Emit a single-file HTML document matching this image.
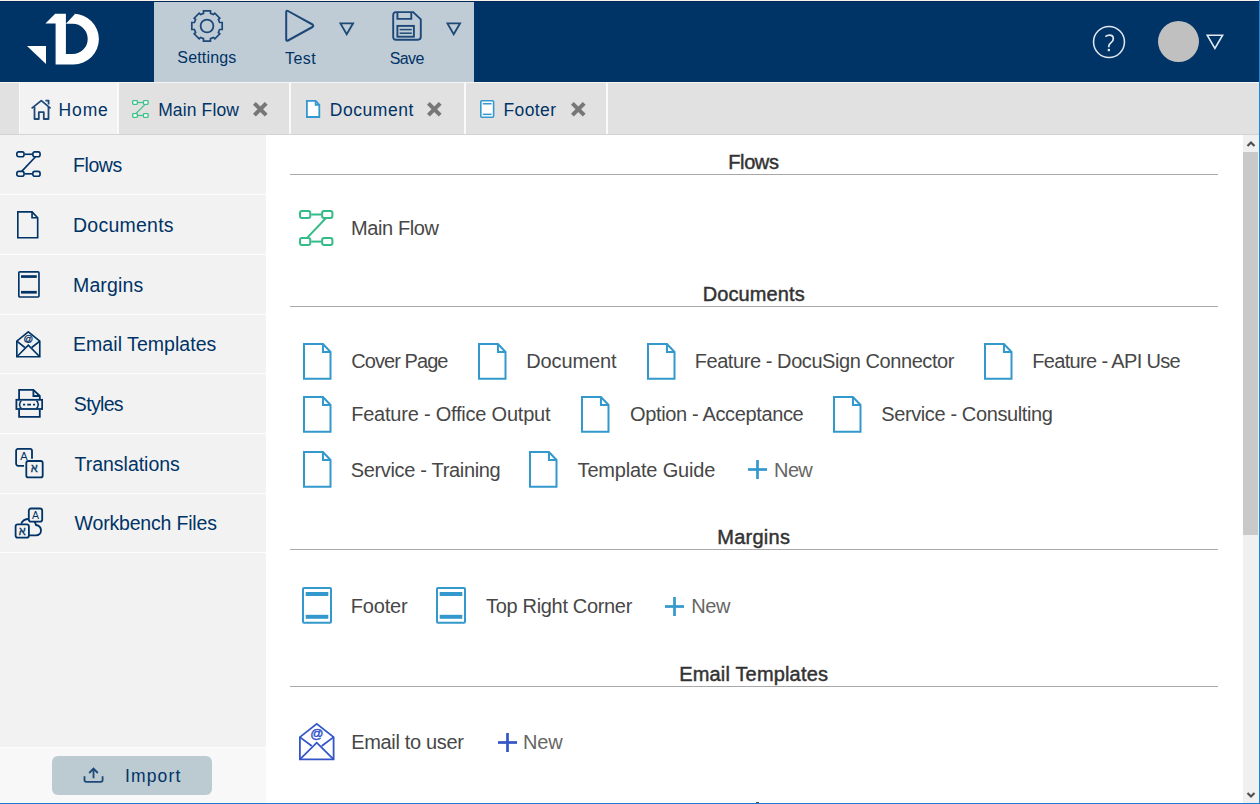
<!DOCTYPE html>
<html><head><meta charset="utf-8">
<style>
*{box-sizing:border-box;margin:0;padding:0}
html,body{width:1260px;height:804px;overflow:hidden;background:#fff;font-family:"Liberation Sans",sans-serif}
.a{position:absolute;display:block}
.t{position:absolute;white-space:nowrap;line-height:1}
</style></head><body>

<div class="a" style="left:0;top:0;width:1260px;height:1px;background:#f7f4ee"></div>
<div class="a" style="left:0;top:1px;width:1260px;height:1px;background:#00265c"></div>
<div class="a" style="left:0;top:2px;width:1260px;height:80px;background:#003366"></div>
<div class="a" style="left:154px;top:2px;width:320px;height:80px;background:#bfccd5"></div>
<div class="a" style="left:0;top:82px;width:1259px;height:53px;background:#e1e1e1"></div>
<div class="a" style="left:0;top:82px;width:1259px;height:1px;background:#f6f6f6"></div>
<div class="a" style="left:0;top:134px;width:1259px;height:1px;background:#d3d3d3"></div>
<div class="a" style="left:20px;top:83px;width:97px;height:51px;background:#f2f2f2"></div>
<div class="a" style="left:19px;top:83px;width:1px;height:51px;background:#fafafa"></div>
<div class="a" style="left:117px;top:83px;width:2px;height:51px;background:#fafafa"></div>
<div class="a" style="left:289px;top:83px;width:2px;height:51px;background:#fafafa"></div>
<div class="a" style="left:464px;top:83px;width:2px;height:51px;background:#fafafa"></div>
<div class="a" style="left:606px;top:83px;width:2px;height:51px;background:#fafafa"></div>
<div class="a" style="left:0;top:135px;width:266px;height:612px;background:#f2f2f2"></div>
<div class="a" style="left:0;top:747px;width:266px;height:1px;background:#fefefe"></div>
<div class="a" style="left:0;top:748px;width:266px;height:55px;background:#f8f8f8"></div>
<div class="a" style="left:0;top:194px;width:266px;height:1px;background:#fdfdfd"></div>
<div class="a" style="left:0;top:254px;width:266px;height:1px;background:#fdfdfd"></div>
<div class="a" style="left:0;top:314px;width:266px;height:1px;background:#fdfdfd"></div>
<div class="a" style="left:0;top:373px;width:266px;height:1px;background:#fdfdfd"></div>
<div class="a" style="left:0;top:433px;width:266px;height:1px;background:#fdfdfd"></div>
<div class="a" style="left:0;top:493px;width:266px;height:1px;background:#fdfdfd"></div>
<div class="a" style="left:0;top:552px;width:266px;height:1px;background:#fdfdfd"></div>
<div class="a" style="left:1243px;top:135px;width:16px;height:668px;background:#f0f0f0"></div>
<div class="a" style="left:1243px;top:152px;width:15px;height:383px;background:#c9c9c9"></div>
<svg class="a" style="left:1243px;top:135px;" width="16" height="17" viewBox="0 0 16 17"><path d="M4.5,11 L8,7.5 L11.5,11" fill="none" stroke="#505050" stroke-width="2.2"/></svg>
<svg class="a" style="left:1243px;top:787px;" width="16" height="17" viewBox="0 0 16 17"><path d="M4.5,6 L8,9.5 L11.5,6" fill="none" stroke="#505050" stroke-width="2.2"/></svg>
<div class="a" style="left:1259px;top:0;width:1px;height:804px;background:#1f86d6"></div>
<div class="a" style="left:0;top:803px;width:1260px;height:1px;background:#1a7bd2"></div>
<svg class="a" style="left:20px;top:8px;" width="90" height="62" viewBox="0 0 90 62"><g transform="translate(-20,-8)" fill="#fff"><path d="M27,46 L46,46 L46,64 Z"/><path d="M45.4,23.6 L55.2,13.7 L65.9,13.7 L65.9,23.8 L75.2,13.7 L73.5,13.7 A25.4,25.4 0 0 1 73.5,64.5 L55.6,64.5 L55.6,23.6 Z M65.9,23.8 L72.6,23.8 A15.1,15.1 0 0 1 72.6,54 L65.9,54 Z" fill-rule="evenodd"/></g></svg>
<svg class="a" style="left:190px;top:9px;" width="34" height="34" viewBox="0 0 34 34"><path d="M13.50,4.40 L13.50,1.80 L20.50,1.80 L20.50,4.40 L23.43,5.62 L24.85,4.20 L29.80,9.15 L28.38,10.57 L29.60,13.50 L32.20,13.50 L32.20,20.50 L29.60,20.50 L28.38,23.43 L29.80,24.85 L24.85,29.80 L23.43,28.38 L20.50,29.60 L20.50,32.20 L13.50,32.20 L13.50,29.60 L10.57,28.38 L9.15,29.80 L4.20,24.85 L5.62,23.43 L4.40,20.50 L1.80,20.50 L1.80,13.50 L4.40,13.50 L5.62,10.57 L4.20,9.15 L9.15,4.20 L10.57,5.62 Z" fill="none" stroke="#1d4878" stroke-width="1.7" stroke-linejoin="miter"/><circle cx="17" cy="17" r="6.4" fill="none" stroke="#1d4878" stroke-width="1.8"/></svg>
<div class="t" style="left:177.32px;top:50.2px;font-size:16px;color:#003366;font-weight:normal;letter-spacing:0.160px;">Settings</div>
<svg class="a" style="left:284px;top:9px;" width="32" height="35" viewBox="0 0 32 35"><path d="M2.2,3 Q2.2,1 4,2 L28.5,15.5 Q30,17 28.5,18 L4,31.5 Q2.2,32.5 2.2,30.5 Z" fill="none" stroke="#1d4878" stroke-width="2" stroke-linejoin="round"/></svg>
<div class="t" style="left:285.00px;top:50.7px;font-size:16px;color:#003366;font-weight:normal;letter-spacing:0.427px;">Test</div>
<svg class="a" style="left:338.5px;top:21.5px;" width="16" height="14" viewBox="0 0 16 14"><path d="M1.3,1.3 L14.1,1.3 L7.7,12.3 Z" fill="none" stroke="#1d4878" stroke-width="1.8" stroke-linejoin="miter"/></svg>
<svg class="a" style="left:445.5px;top:21.5px;" width="16" height="14" viewBox="0 0 16 14"><path d="M1.3,1.3 L14.1,1.3 L7.7,12.3 Z" fill="none" stroke="#1d4878" stroke-width="1.8" stroke-linejoin="miter"/></svg>
<svg class="a" style="left:391px;top:10px;" width="32" height="32" viewBox="0 0 32 32"><path d="M5,2.1 L22.2,2.1 L29.8,9.4 L29.8,26.8 Q29.8,29.7 26.9,29.7 L5,29.7 Q2.2,29.7 2.2,26.9 L2.2,4.9 Q2.2,2.1 5,2.1 Z" fill="none" stroke="#1d4878" stroke-width="1.9"/><path d="M6.4,2.4 L6.4,8.9 L20.3,8.9 L20.3,2.4" fill="none" stroke="#1d4878" stroke-width="1.9"/><rect x="6.4" y="15.9" width="16.5" height="10.8" fill="none" stroke="#1d4878" stroke-width="1.9"/><line x1="8.6" y1="19.6" x2="20.8" y2="19.6" stroke="#1d4878" stroke-width="1.5"/><line x1="8.6" y1="23.2" x2="20.8" y2="23.2" stroke="#1d4878" stroke-width="1.5"/></svg>
<div class="t" style="left:389.82px;top:50.7px;font-size:16px;color:#003366;font-weight:normal;letter-spacing:-0.640px;">Save</div>
<svg class="a" style="left:1092px;top:25px;" width="34" height="34" viewBox="0 0 34 34"><circle cx="17" cy="17" r="15.45" fill="none" stroke="#dfe6ee" stroke-width="1.55"/><path d="M13.4,11.6 Q15.3,10.1 17.5,10.1 Q21.3,10.1 21.3,13.7 Q21.3,16 19.1,17.6 Q16.8,19.2 16.8,21.2 L16.8,22.2" fill="none" stroke="#dfe6ee" stroke-width="1.75"/><rect x="15.7" y="23.9" width="2.3" height="2.3" fill="#dfe6ee"/></svg>
<div class="a" style="left:1158px;top:20.5px;width:41px;height:41px;border-radius:50%;background:#c0c0c0"></div>
<svg class="a" style="left:1206px;top:34px;" width="18" height="17" viewBox="0 0 18 17"><path d="M1.2,1.2 L16.6,1.2 L8.9,14.5 Z" fill="none" stroke="#e3e9ef" stroke-width="1.6"/></svg>
<svg class="a" style="left:30px;top:99px;" width="23" height="22" viewBox="0 0 23 22"><g transform="translate(-30,-99)" fill="none" stroke="#1d4878" stroke-width="1.8" stroke-linejoin="round"><path d="M31.6,108.4 L41.3,100.6 L50.6,108.4"/><path d="M45.4,100.6 L48.6,100.6 L48.6,104.5"/><path d="M34.5,107 L34.5,119 L38.8,119 L38.8,112.2 L43.8,112.2 L43.8,119 L48.5,119 L48.5,107"/></g></svg>
<div class="t" style="left:58.58px;top:101.7px;font-size:17.5px;color:#003366;font-weight:normal;letter-spacing:0.853px;">Home</div>
<svg class="a" style="left:132px;top:99.7px;" width="18" height="19" viewBox="0 0 18 19"><line x1="6.05" y1="2.52" x2="10.75" y2="2.52" stroke="#3cc08a" stroke-width="1.2"/><line x1="6.05" y1="15.48" x2="10.75" y2="15.48" stroke="#3cc08a" stroke-width="1.2"/><line x1="13.17" y1="4.37" x2="3.87" y2="13.63" stroke="#3cc08a" stroke-width="1.2"/><rect x="0.68" y="0.68" width="4.70" height="3.69" rx="0.80" fill="#fff" stroke="#3cc08a" stroke-width="1.35"/><rect x="0.68" y="13.63" width="4.70" height="3.69" rx="0.80" fill="#fff" stroke="#3cc08a" stroke-width="1.35"/><rect x="11.43" y="0.68" width="4.70" height="3.69" rx="0.80" fill="#fff" stroke="#3cc08a" stroke-width="1.35"/><rect x="11.43" y="13.63" width="4.70" height="3.69" rx="0.80" fill="#fff" stroke="#3cc08a" stroke-width="1.35"/></svg>
<div class="t" style="left:158.14px;top:101.7px;font-size:17.5px;color:#003366;font-weight:normal;letter-spacing:0.140px;">Main Flow</div>
<svg class="a" style="left:252.5px;top:101.5px;" width="15" height="15" viewBox="0 0 15 15"><path d="M1.4,1.4 L13.2,13.2 M13.2,1.4 L1.4,13.2" stroke="#777" stroke-width="4" stroke-linecap="butt"/></svg>
<svg class="a" style="left:305.8px;top:100px;" width="15" height="19" viewBox="0 0 15 19"><path d="M0.9,0.9 L9.66,0.9 L13.30,4.90 L13.30,17.00 L0.9,17.00 Z" fill="#fff" stroke="#3399d0" stroke-width="1.8" stroke-linejoin="miter"/><path d="M9.66,0.9 L9.66,4.90 L13.30,4.90" fill="none" stroke="#3399d0" stroke-width="1.8"/></svg>
<div class="t" style="left:329.70px;top:101.7px;font-size:17.5px;color:#003366;font-weight:normal;letter-spacing:0.571px;">Document</div>
<svg class="a" style="left:427px;top:101.5px;" width="15" height="15" viewBox="0 0 15 15"><path d="M1.4,1.4 L13.2,13.2 M13.2,1.4 L1.4,13.2" stroke="#777" stroke-width="4" stroke-linecap="butt"/></svg>
<svg class="a" style="left:480.4px;top:100px;" width="15" height="19" viewBox="0 0 15 19"><rect x="0.8" y="0.8" width="12.80" height="16.50" rx="1" fill="#fff" stroke="#3399d0" stroke-width="1.6"/><rect x="2.80" y="3.00" width="8.80" height="1.5" fill="#3399d0"/><rect x="2.80" y="13.60" width="8.80" height="1.5" fill="#3399d0"/></svg>
<div class="t" style="left:503.52px;top:101.7px;font-size:17.5px;color:#003366;font-weight:normal;letter-spacing:0.384px;">Footer</div>
<svg class="a" style="left:570.5px;top:101.5px;" width="15" height="15" viewBox="0 0 15 15"><path d="M1.4,1.4 L13.2,13.2 M13.2,1.4 L1.4,13.2" stroke="#777" stroke-width="4" stroke-linecap="butt"/></svg>
<svg class="a" style="left:15.7px;top:151.2px;" width="26" height="27" viewBox="0 0 26 27"><line x1="8.89" y1="3.26" x2="16.01" y2="3.26" stroke="#003366" stroke-width="1.65"/><line x1="8.89" y1="22.84" x2="16.01" y2="22.84" stroke="#003366" stroke-width="1.65"/><line x1="19.57" y1="5.70" x2="5.69" y2="20.40" stroke="#003366" stroke-width="1.65"/><rect x="0.82" y="0.82" width="7.24" height="4.88" rx="2.00" fill="none" stroke="#003366" stroke-width="1.65"/><rect x="0.82" y="20.40" width="7.24" height="4.88" rx="2.00" fill="none" stroke="#003366" stroke-width="1.65"/><rect x="16.84" y="0.82" width="7.24" height="4.88" rx="2.00" fill="none" stroke="#003366" stroke-width="1.65"/><rect x="16.84" y="20.40" width="7.24" height="4.88" rx="2.00" fill="none" stroke="#003366" stroke-width="1.65"/></svg>
<svg class="a" style="left:16.9px;top:210.9px;" width="22" height="29" viewBox="0 0 22 29"><path d="M0.825,0.825 L15.05,0.825 L20.68,6.78 L20.68,26.78 L0.825,26.78 Z" fill="none" stroke="#003366" stroke-width="1.65" stroke-linejoin="miter"/><path d="M15.05,0.825 L15.05,6.78 L20.68,6.78" fill="none" stroke="#003366" stroke-width="1.65"/></svg>
<svg class="a" style="left:18px;top:271px;" width="23" height="28" viewBox="0 0 23 28"><rect x="0.825" y="0.825" width="20.15" height="25.15" rx="1" fill="none" stroke="#003366" stroke-width="1.65"/><rect x="3.00" y="4.20" width="15.80" height="2.7" fill="#003366"/><rect x="3.00" y="19.90" width="15.80" height="2.7" fill="#003366"/></svg>
<svg class="a" style="left:16.2px;top:331.2px;" width="26" height="28" viewBox="0 0 26 28"><path d="M0.825,10.11 L12.30,0.825 L23.78,10.11 L23.78,25.78 L0.825,25.78 Z" fill="none" stroke="#003366" stroke-width="1.65" stroke-linejoin="miter"/><path d="M0.825,25.78 L12.30,14.10 L23.78,25.78" fill="none" stroke="#003366" stroke-width="1.65"/><path d="M0.825,10.11 L8.86,16.49 M23.78,10.11 L15.74,16.49" fill="none" stroke="#003366" stroke-width="1.65"/><text x="12.30" y="10.91" text-anchor="middle" font-family="Liberation Sans" font-size="9.5" fill="#003366" stroke="#003366" stroke-width="0.33">@</text></svg>
<svg class="a" style="left:15px;top:388px;" width="28" height="31" viewBox="0 0 28 31"><g fill="none" stroke="#003366" stroke-width="1.8"><path d="M4.1,11 L4.1,1.9 L18.4,1.9 L24.8,8 L24.8,11"/><path d="M18.4,1.9 L18.4,8 L24.8,8"/><path d="M4.1,21.8 L4.1,28.9 L24.8,28.9 L24.8,21.8"/><rect x="1.4" y="11.8" width="25.8" height="9.2"/></g><g fill="none" stroke="#003366" stroke-width="1.5"><path d="M6.6,13.3 Q4.9,13.3 4.9,14.9 L4.9,15.8 Q4.9,16.6 3.8,16.6 Q4.9,16.6 4.9,17.4 L4.9,18.3 Q4.9,19.9 6.6,19.9"/><path d="M21.2,13.3 Q22.9,13.3 22.9,14.9 L22.9,15.8 Q22.9,16.6 24.1,16.6 Q22.9,16.6 22.9,17.4 L22.9,18.3 Q22.9,19.9 21.2,19.9"/></g><path d="M8,16.6 L10.2,16.6 M12.2,16.6 L16,16.6 M18,16.6 L20.1,16.6" stroke="#003366" stroke-width="1.9"/></svg>
<svg class="a" style="left:14px;top:447px;" width="30" height="32" viewBox="0 0 30 32"><rect x="2.1" y="1.8" width="15.9" height="17" rx="2" fill="none" stroke="#003366" stroke-width="1.8"/><rect x="12.3" y="14" width="16.4" height="16.4" rx="2" fill="none" stroke="#f2f2f2" stroke-width="4.5"/><rect x="12.3" y="14" width="16.4" height="16.4" rx="2" fill="#f2f2f2" stroke="#003366" stroke-width="1.8"/><text x="9.9" y="13.2" text-anchor="middle" font-family="Liberation Sans" font-size="11" fill="#003366">A</text><text x="20.3" y="25.4" text-anchor="middle" font-family="Liberation Sans" font-size="11" fill="#003366" stroke="#003366" stroke-width="0.3">א</text></svg>
<svg class="a" style="left:13px;top:506px;" width="31" height="33" viewBox="0 0 31 33"><path d="M8.2,17.6 C9.5,14.6 12.5,13 15.8,13 C19.5,13 22.2,15.5 23,19 C26,19.6 28,22 28,24.6 C28,27.4 25.8,29.3 23,29.3 L15.9,29.3" fill="none" stroke="#003366" stroke-width="1.8"/><rect x="15.8" y="2.5" width="13.4" height="13.2" rx="2.2" fill="#f2f2f2" stroke="#003366" stroke-width="1.8"/><rect x="2.6" y="18.3" width="13.3" height="13.4" rx="2.2" fill="#f2f2f2" stroke="#003366" stroke-width="1.8"/><text x="22.6" y="13.3" text-anchor="middle" font-family="Liberation Sans" font-size="10.5" fill="#003366">A</text><text x="9.2" y="28.6" text-anchor="middle" font-family="Liberation Sans" font-size="11" fill="#003366" stroke="#003366" stroke-width="0.3">א</text></svg>
<div class="t" style="left:73.02px;top:156.0px;font-size:19.5px;color:#003366;font-weight:normal;letter-spacing:-0.440px;">Flows</div>
<div class="t" style="left:73.02px;top:215.9px;font-size:19.5px;color:#003366;font-weight:normal;letter-spacing:0.240px;">Documents</div>
<div class="t" style="left:73.02px;top:275.9px;font-size:19.5px;color:#003366;font-weight:normal;letter-spacing:0.133px;">Margins</div>
<div class="t" style="left:73.02px;top:334.9px;font-size:19.5px;color:#003366;font-weight:normal;letter-spacing:0.046px;">Email Templates</div>
<div class="t" style="left:73.82px;top:395.2px;font-size:19.5px;color:#003366;font-weight:normal;letter-spacing:-0.672px;">Styles</div>
<div class="t" style="left:74.62px;top:454.9px;font-size:19.5px;color:#003366;font-weight:normal;letter-spacing:-0.029px;">Translations</div>
<div class="t" style="left:74.62px;top:514.1px;font-size:19.5px;color:#003366;font-weight:normal;letter-spacing:-0.183px;">Workbench Files</div>
<div class="a" style="left:52px;top:756px;width:160px;height:39px;border-radius:6px;background:#bccad2"></div>
<svg class="a" style="left:83px;top:767px;" width="22" height="17" viewBox="0 0 22 17"><g fill="none" stroke="#1d4878" stroke-width="1.8"><path d="M1.5,9.2 L1.5,13.1 Q1.5,14.9 3.3,14.9 L17.8,14.9 Q19.6,14.9 19.6,13.1 L19.6,9.2"/><path d="M10.5,11.2 L10.5,1.8 M6.2,6 L10.5,1.6 L14.8,6"/></g></svg>
<div class="t" style="left:125.08px;top:767.8px;font-size:17.5px;color:#003366;font-weight:normal;letter-spacing:1.120px;">Import</div>
<div class="a" style="left:290px;top:174px;width:928px;height:1px;background:#a8a8a8"></div>
<div class="a" style="left:290px;top:306px;width:928px;height:1px;background:#a8a8a8"></div>
<div class="a" style="left:290px;top:549px;width:928px;height:1px;background:#a8a8a8"></div>
<div class="a" style="left:290px;top:686px;width:928px;height:1px;background:#a8a8a8"></div>
<div class="t" style="left:728.28px;top:152.1px;font-size:20px;color:#333;font-weight:normal;letter-spacing:-0.400px;-webkit-text-stroke:0.45px #333;">Flows</div>
<div class="t" style="left:702.70px;top:284.1px;font-size:20px;color:#333;font-weight:normal;letter-spacing:0.100px;-webkit-text-stroke:0.45px #333;">Documents</div>
<div class="t" style="left:717.32px;top:527.1px;font-size:20px;color:#333;font-weight:normal;letter-spacing:0.240px;-webkit-text-stroke:0.45px #333;">Margins</div>
<div class="t" style="left:679.20px;top:664.1px;font-size:20px;color:#333;font-weight:normal;letter-spacing:0.171px;-webkit-text-stroke:0.45px #333;">Email Templates</div>
<svg class="a" style="left:299.2px;top:209.8px;" width="35" height="37" viewBox="0 0 35 37"><line x1="12.28" y1="4.51" x2="22.12" y2="4.51" stroke="#33bb88" stroke-width="2"/><line x1="12.28" y1="31.59" x2="22.12" y2="31.59" stroke="#33bb88" stroke-width="2"/><line x1="27.03" y1="8.03" x2="7.86" y2="28.08" stroke="#33bb88" stroke-width="2"/><rect x="1.00" y="1.00" width="10.28" height="7.03" rx="2.00" fill="none" stroke="#33bb88" stroke-width="2"/><rect x="1.00" y="28.08" width="10.28" height="7.03" rx="2.00" fill="none" stroke="#33bb88" stroke-width="2"/><rect x="23.12" y="1.00" width="10.28" height="7.03" rx="2.00" fill="none" stroke="#33bb88" stroke-width="2"/><rect x="23.12" y="28.08" width="10.28" height="7.03" rx="2.00" fill="none" stroke="#33bb88" stroke-width="2"/></svg>
<div class="t" style="left:351.02px;top:218.3px;font-size:20px;color:#474747;font-weight:normal;letter-spacing:-0.400px;">Main Flow</div>
<svg class="a" style="left:303.1px;top:343.1px;" width="30" height="38" viewBox="0 0 30 38"><path d="M1.0,1.0 L19.95,1.0 L27.50,8.95 L27.50,35.80 L1.0,35.80 Z" fill="none" stroke="#3399cc" stroke-width="2" stroke-linejoin="miter"/><path d="M19.95,1.0 L19.95,8.95 L27.50,8.95" fill="none" stroke="#3399cc" stroke-width="2"/></svg>
<div class="t" style="left:351.20px;top:350.9px;font-size:20px;color:#474747;font-weight:normal;letter-spacing:-0.924px;">Cover Page</div>
<svg class="a" style="left:478px;top:343.1px;" width="30" height="38" viewBox="0 0 30 38"><path d="M1.0,1.0 L19.95,1.0 L27.50,8.95 L27.50,35.80 L1.0,35.80 Z" fill="none" stroke="#3399cc" stroke-width="2" stroke-linejoin="miter"/><path d="M19.95,1.0 L19.95,8.95 L27.50,8.95" fill="none" stroke="#3399cc" stroke-width="2"/></svg>
<div class="t" style="left:526.20px;top:350.9px;font-size:20px;color:#474747;font-weight:normal;letter-spacing:-0.114px;">Document</div>
<svg class="a" style="left:646.5px;top:343.1px;" width="30" height="38" viewBox="0 0 30 38"><path d="M1.0,1.0 L19.95,1.0 L27.50,8.95 L27.50,35.80 L1.0,35.80 Z" fill="none" stroke="#3399cc" stroke-width="2" stroke-linejoin="miter"/><path d="M19.95,1.0 L19.95,8.95 L27.50,8.95" fill="none" stroke="#3399cc" stroke-width="2"/></svg>
<div class="t" style="left:694.70px;top:350.9px;font-size:20px;color:#474747;font-weight:normal;letter-spacing:-0.427px;">Feature - DocuSign Connector</div>
<svg class="a" style="left:983.6px;top:343.1px;" width="30" height="38" viewBox="0 0 30 38"><path d="M1.0,1.0 L19.95,1.0 L27.50,8.95 L27.50,35.80 L1.0,35.80 Z" fill="none" stroke="#3399cc" stroke-width="2" stroke-linejoin="miter"/><path d="M19.95,1.0 L19.95,8.95 L27.50,8.95" fill="none" stroke="#3399cc" stroke-width="2"/></svg>
<div class="t" style="left:1032.20px;top:350.9px;font-size:20px;color:#474747;font-weight:normal;letter-spacing:-0.650px;">Feature - API Use</div>
<svg class="a" style="left:303.1px;top:396.2px;" width="30" height="38" viewBox="0 0 30 38"><path d="M1.0,1.0 L19.95,1.0 L27.50,8.95 L27.50,35.80 L1.0,35.80 Z" fill="none" stroke="#3399cc" stroke-width="2" stroke-linejoin="miter"/><path d="M19.95,1.0 L19.95,8.95 L27.50,8.95" fill="none" stroke="#3399cc" stroke-width="2"/></svg>
<div class="t" style="left:351.20px;top:403.9px;font-size:20px;color:#474747;font-weight:normal;letter-spacing:-0.218px;">Feature - Office Output</div>
<svg class="a" style="left:580.6px;top:396.2px;" width="30" height="38" viewBox="0 0 30 38"><path d="M1.0,1.0 L19.95,1.0 L27.50,8.95 L27.50,35.80 L1.0,35.80 Z" fill="none" stroke="#3399cc" stroke-width="2" stroke-linejoin="miter"/><path d="M19.95,1.0 L19.95,8.95 L27.50,8.95" fill="none" stroke="#3399cc" stroke-width="2"/></svg>
<div class="t" style="left:630.00px;top:403.9px;font-size:20px;color:#474747;font-weight:normal;letter-spacing:-0.356px;">Option - Acceptance</div>
<svg class="a" style="left:833px;top:396.2px;" width="30" height="38" viewBox="0 0 30 38"><path d="M1.0,1.0 L19.95,1.0 L27.50,8.95 L27.50,35.80 L1.0,35.80 Z" fill="none" stroke="#3399cc" stroke-width="2" stroke-linejoin="miter"/><path d="M19.95,1.0 L19.95,8.95 L27.50,8.95" fill="none" stroke="#3399cc" stroke-width="2"/></svg>
<div class="t" style="left:881.20px;top:403.9px;font-size:20px;color:#474747;font-weight:normal;letter-spacing:-0.379px;">Service - Consulting</div>
<svg class="a" style="left:303.1px;top:451.4px;" width="30" height="38" viewBox="0 0 30 38"><path d="M1.0,1.0 L19.95,1.0 L27.50,8.95 L27.50,35.80 L1.0,35.80 Z" fill="none" stroke="#3399cc" stroke-width="2" stroke-linejoin="miter"/><path d="M19.95,1.0 L19.95,8.95 L27.50,8.95" fill="none" stroke="#3399cc" stroke-width="2"/></svg>
<div class="t" style="left:350.70px;top:459.8px;font-size:20px;color:#474747;font-weight:normal;letter-spacing:-0.329px;">Service - Training</div>
<svg class="a" style="left:528.8px;top:451.4px;" width="30" height="38" viewBox="0 0 30 38"><path d="M1.0,1.0 L19.95,1.0 L27.50,8.95 L27.50,35.80 L1.0,35.80 Z" fill="none" stroke="#3399cc" stroke-width="2" stroke-linejoin="miter"/><path d="M19.95,1.0 L19.95,8.95 L27.50,8.95" fill="none" stroke="#3399cc" stroke-width="2"/></svg>
<div class="t" style="left:577.62px;top:459.8px;font-size:20px;color:#474747;font-weight:normal;letter-spacing:-0.185px;">Template Guide</div>
<svg class="a" style="left:748px;top:460px;" width="19" height="19" viewBox="0 0 19 19"><rect x="8.15" y="0" width="2.7" height="19" fill="#3399cc"/><rect x="0" y="8.15" width="19" height="2.7" fill="#3399cc"/></svg>
<div class="t" style="left:774.08px;top:460.1px;font-size:20px;color:#666;font-weight:normal;letter-spacing:-0.640px;">New</div>
<svg class="a" style="left:302.3px;top:587px;" width="31" height="38" viewBox="0 0 31 38"><rect x="1.0" y="1.0" width="28.00" height="34.80" rx="1" fill="none" stroke="#3399cc" stroke-width="2"/><rect x="3.70" y="5.00" width="22.60" height="4" fill="#3399cc"/><rect x="3.70" y="27.80" width="22.60" height="4" fill="#3399cc"/></svg>
<div class="t" style="left:350.70px;top:596.3px;font-size:20px;color:#474747;font-weight:normal;letter-spacing:-0.160px;">Footer</div>
<svg class="a" style="left:436px;top:587px;" width="31" height="38" viewBox="0 0 31 38"><rect x="1.0" y="1.0" width="28.00" height="34.80" rx="1" fill="none" stroke="#3399cc" stroke-width="2"/><rect x="3.70" y="5.00" width="22.60" height="4" fill="#3399cc"/><rect x="3.70" y="27.80" width="22.60" height="4" fill="#3399cc"/></svg>
<div class="t" style="left:486.12px;top:596.3px;font-size:20px;color:#474747;font-weight:normal;letter-spacing:-0.331px;">Top Right Corner</div>
<svg class="a" style="left:665px;top:596.5px;" width="19" height="19" viewBox="0 0 19 19"><rect x="8.15" y="0" width="2.7" height="19" fill="#3399cc"/><rect x="0" y="8.15" width="19" height="2.7" fill="#3399cc"/></svg>
<div class="t" style="left:691.20px;top:596.3px;font-size:20px;color:#666;font-weight:normal;letter-spacing:-0.400px;">New</div>
<svg class="a" style="left:299px;top:723.3px;" width="36" height="38" viewBox="0 0 36 38"><path d="M0.9,14.14 L17.75,0.9 L34.60,14.14 L34.60,36.30 L0.9,36.30 Z" fill="none" stroke="#3355c8" stroke-width="1.8" stroke-linejoin="miter"/><path d="M0.9,36.30 L17.75,19.72 L34.60,36.30" fill="none" stroke="#3355c8" stroke-width="1.8"/><path d="M0.9,14.14 L12.78,23.06 M34.60,14.14 L22.72,23.06" fill="none" stroke="#3355c8" stroke-width="1.8"/><text x="17.75" y="15.17" text-anchor="middle" font-family="Liberation Sans" font-size="13" fill="#3355c8" stroke="#3355c8" stroke-width="0.46">@</text></svg>
<div class="t" style="left:351.20px;top:732.1px;font-size:20px;color:#474747;font-weight:normal;letter-spacing:-0.333px;">Email to user</div>
<svg class="a" style="left:498px;top:732.5px;" width="19" height="19" viewBox="0 0 19 19"><rect x="8.15" y="0" width="2.7" height="19" fill="#3355c8"/><rect x="0" y="8.15" width="19" height="2.7" fill="#3355c8"/></svg>
<div class="t" style="left:522.96px;top:732.1px;font-size:20px;color:#666;font-weight:normal;letter-spacing:-0.080px;">New</div>
<div class="a" style="left:756px;top:802px;width:3px;height:1px;background:#555"></div>
</body></html>
